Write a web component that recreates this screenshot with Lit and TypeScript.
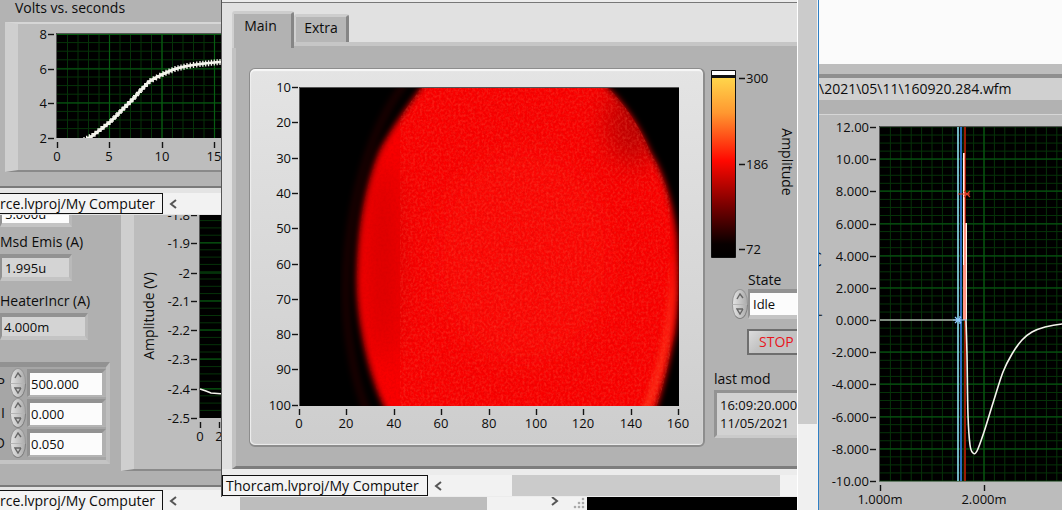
import { LitElement, html, svg, css } from "lit";
import { customElement, property } from "lit/decorators.js";

type Pt = [number, number];

const base = css`
  * { box-sizing: border-box; }
  svg { display: block; }
  text { font-family: "Open Sans", "Noto Sans", sans-serif; font-size: 13px; fill: #0c0c0c; }
  .caption { font-size: 14px; }
  .end { text-anchor: end; }
  .mid { text-anchor: middle; }
  .tick { stroke: #141414; stroke-width: 1.4; }
  .minor { stroke: #063309; stroke-width: 1; }
  .major { stroke: #075c12; stroke-width: 1.2; }
  .plot { fill: #000; }
  .edge { stroke: #555; stroke-width: 1; fill: none; }
  .trace { stroke: #f4f4ec; stroke-width: 1.6; fill: none; }
`;

/** Catmull-Rom spline through the points, as a cubic path. */
function smooth(pts: Pt[]): string {
  let d = `M${pts[0][0]} ${pts[0][1]}`;
  for (let i = 0; i < pts.length - 1; i++) {
    const a = pts[Math.max(0, i - 1)], b = pts[i], c = pts[i + 1], e = pts[Math.min(pts.length - 1, i + 2)];
    d += `C${b[0] + (c[0] - a[0]) / 6} ${b[1] + (c[1] - a[1]) / 6} ${c[0] - (e[0] - b[0]) / 6} ${c[1] - (e[1] - b[1]) / 6} ${c[0]} ${c[1]}`;
  }
  return d;
}

function range(from: number, to: number, step: number): number[] {
  const out: number[] = [];
  for (let v = from; v <= to + 0.001; v += step) out.push(v);
  return out;
}

function grid(x: number[], y: number[], x0: number, x1: number, y0: number, y1: number, kind: string) {
  return svg`<path class=${kind} fill="none" d=${
    x.map((v) => `M${v} ${y0}V${y1}`).join("") + y.map((v) => `M${x0} ${v}H${x1}`).join("")
  }></path>`;
}

const yTicks = (items: [string, number][], x: number) =>
  items.map(([t, y]) => svg`<path class="tick" d=${`M${x} ${y + 0.5}h6`}></path>
    <text class="end" x=${x - 1} y=${y + 5}>${t}</text>`);

const xTicks = (items: [string, number][], y: number) =>
  items.map(([t, x]) => svg`<path class="tick" d=${`M${x + 0.5} ${y}v6`}></path>
    <text class="mid" x=${x} y=${y + 19}>${t}</text>`);

/** Cathode voltage against time. */
@customElement("volts-chart")
class VoltsChart extends LitElement {
  static styles = [base, css`:host { display: block; }
    .marks { stroke: #f4f4ec; stroke-width: 1.3; fill: none; }
    .body { stroke: #f4f4ec; stroke-width: 2.6; fill: none; }`];
  render() {
    const knots: Pt[] = [[66, 116], [74, 112], [92, 98], [104, 86], [115, 75], [124, 65], [132, 57], [145, 50], [157, 45], [169, 42], [182, 40], [202, 38], [230, 37]];
    let marks = "";
    for (let i = 1; i < knots.length; i++) {
      const [ax, ay] = knots[i - 1], [bx, by] = knots[i];
      const n = Math.max(1, Math.round((bx - ax) / 3));
      for (let k = 0; k < n; k++) {
        const x = ax + ((bx - ax) * k) / n, y = ay + ((by - ay) * k) / n;
        marks += `M${x - 3} ${y}h6M${x} ${y - 3}v6`;
      }
    }
    return html`<svg width="100%" height="146" role="img" aria-label="Volts vs. seconds">
      <defs><clipPath id="c"><rect x="38" y="9" width="400" height="105"></rect></clipPath></defs>
      <rect class="plot" x="38" y="9" width="400" height="105"></rect>
      ${grid(range(49.5, 300, 10.5), range(18.6, 110, 8.6), 38, 438, 10, 114, "minor")}
      ${grid([91.5, 144, 196.5], [10.5, 45, 79], 38, 438, 10, 114, "major")}
      <path class="edge" d="M38.500 114V9.500H438"></path>
      <g clip-path="url(#c)">
        <path class="body" d=${smooth(knots)}></path>
        <path class="marks" d=${marks}></path>
      </g>
      ${yTicks([["8", 10], ["6", 45], ["4", 79], ["2", 114]], 30)}
      ${xTicks([["0", 39], ["5", 91], ["10", 144], ["15", 196]], 118)}
    </svg>`;
  }
}

/** Negative bias voltage strip. */
@customElement("bias-chart")
class BiasChart extends LitElement {
  static styles = [base, css`:host { display: block; }`];
  render() {
    return html`<svg width="100%" height="260" role="img" aria-label="Amplitude (V)">
      <rect class="plot" x="65" y="0" width="400" height="212"></rect>
      ${grid([], range(0, 211, 7.3), 65, 465, 0, 212, "minor")}
      ${grid([], [8, 37, 67, 95, 124, 153, 183], 65, 465, 0, 212, "major")}
      <path class="edge" d="M65.500 0V212"></path>
      <path class="trace" d="M66 183L72 185L77 187L90 188"></path>
      ${yTicks([["-1.8", 9], ["-1.9", 37], ["-2", 67], ["-2.1", 95], ["-2.2", 124], ["-2.3", 153], ["-2.4", 183], ["-2.5", 212]], 57)}
      ${xTicks([["0", 66], ["2", 85]], 216)}
      <text class="caption mid" transform="translate(20 110) rotate(-90)">Amplitude (V)</text>
    </svg>`;
  }
}

/** Camera intensity picture with pixel axes. */
@customElement("camera-image")
class CameraImage extends LitElement {
  static styles = [base, css`:host { display: block; }
    .ring { fill: none; stroke: #4a0000; stroke-width: 7; opacity: 0.4; }
    .rim { fill: none; stroke: url(#fade); stroke-width: 6; opacity: 0.75; }
    .shade { fill: #a80000; }
    .warm { fill: #ff1408; }`];
  render() {
    const disc = "M127 -6C108 20 90 45 80 65C66 100 59 140 58 185C57 215 62 250 72 285C78 305 84 318 90 330H354C364 304 370 275 376 246C380 220 380 180 378 150C374 115 364 85 352 66C340 38 325 15 302 -6Z";
    return html`<svg width="100%" height="376" role="img" aria-label="Camera image">
      <defs>
        <clipPath id="area"><rect width="380" height="319"></rect></clipPath>
        <clipPath id="disc"><path d=${disc}></path></clipPath>
        <linearGradient id="fade" gradientUnits="userSpaceOnUse" x1="0" y1="160" x2="0" y2="319">
          <stop offset="0" stop-color="#ff2010" stop-opacity="0"></stop><stop offset="0.3" stop-color="#ff3018"></stop><stop offset="1" stop-color="#ff4a24"></stop>
        </linearGradient>
        <filter id="soft" x="-10%" y="-10%" width="120%" height="120%"><feGaussianBlur stdDeviation="3"></feGaussianBlur></filter>
        <filter id="glow" filterUnits="userSpaceOnUse" x="280" y="120" width="110" height="230"><feGaussianBlur stdDeviation="3"></feGaussianBlur></filter>
        <filter id="wide" x="-150%" y="-80%" width="400%" height="260%"><feGaussianBlur stdDeviation="14"></feGaussianBlur></filter>
        <filter id="dark" x="0" y="0" width="100%" height="100%">
          <feTurbulence type="fractalNoise" baseFrequency="0.4" numOctaves="2" seed="4"></feTurbulence>
          <feColorMatrix values="0 0 0 0 0.6  0 0 0 0 0  0 0 0 0 0  1.6 0 0 0 -0.6"></feColorMatrix>
        </filter>
        <filter id="light" x="0" y="0" width="100%" height="100%">
          <feTurbulence type="fractalNoise" baseFrequency="0.42 0.36" numOctaves="2" seed="19"></feTurbulence>
          <feColorMatrix values="0 0 0 0 1  0 0 0 0 0.16  0 0 0 0 0.08  0 1.8 0 0 -0.7"></feColorMatrix>
        </filter>
      </defs>
      <g transform="translate(49 18)">
        <rect class="plot" width="380" height="319"></rect>
        <g clip-path="url(#area)">
          <path class="ring" filter="url(#soft)" d="M106 -4C80 30 64 75 55 120C46 170 44 220 52 265C56 290 62 310 68 325"></path>
          <path d=${disc} fill="#fa0000" filter="url(#soft)"></path>
          <g clip-path="url(#disc)">
            <ellipse class="warm" cx="225" cy="170" rx="90" ry="110" filter="url(#wide)" opacity="0.4"></ellipse>
            <ellipse class="shade" cx="335" cy="35" rx="26" ry="42" filter="url(#wide)" opacity="0.8"></ellipse>
            <ellipse class="shade" cx="84" cy="175" rx="16" ry="100" filter="url(#wide)" opacity="0.4"></ellipse>
            <rect width="380" height="319" filter="url(#dark)" opacity="0.4"></rect>
            <rect x="101" width="270" height="319" filter="url(#light)" opacity="0.35"></rect>
            <path class="rim" filter="url(#glow)" d="M374 160C375 225 367 270 346 325"></path>
          </g>
        </g>
        <path class="edge" d="M0.500 319V0.500H380"></path>
      </g>
      ${yTicks([10, 20, 30, 40, 50, 60, 70, 80, 90, 100].map((v, i) => [String(v), 18 + Math.round(i * 35.3)] as [string, number]), 42)}
      ${xTicks([0, 20, 40, 60, 80, 100, 120, 140, 160].map((v, i) => [String(v), Math.round(49 + i * 47.4)] as [string, number]), 340)}
    </svg>`;
  }
}

/** Colour ramp with its scale. */
@customElement("color-ramp")
class ColorRamp extends LitElement {
  static styles = [base, css`:host { display: block; }
    .frame { fill: none; stroke: #111; stroke-width: 1; }
    .over { fill: #fff; }
    .bar { fill: #111; }`];
  render() {
    return html`<svg width="100%" height="189" role="img" aria-label="Amplitude scale">
      <defs><linearGradient id="g" x1="0" y1="0" x2="0" y2="1">
        <stop offset="0" stop-color="#ffe050"></stop><stop offset="0.22" stop-color="#ff9830"></stop>
        <stop offset="0.48" stop-color="#ff0800"></stop><stop offset="0.72" stop-color="#7a0000"></stop>
        <stop offset="0.93" stop-color="#080000"></stop><stop offset="1" stop-color="#000"></stop>
      </linearGradient></defs>
      <rect x="1" y="2" width="24" height="185" fill="url(#g)"></rect>
      <rect class="over" x="1" y="1" width="24" height="5"></rect>
      <rect class="bar" x="1" y="5" width="24" height="3"></rect>
      <path class="frame" d="M0.500 0.500H24.500V187.500H0.500Z"></path>
      <path class="tick" d="M28 8.500h6M28 94.500h6M28 179.500h6"></path>
      <text x="35" y="13">300</text><text x="35" y="99">186</text><text x="35" y="184">72</text>
      <text class="caption mid" transform="translate(71 92) rotate(90)">Amplitude</text>
    </svg>`;
  }
}

/** Recorded waveform with two cursors. */
@customElement("wave-chart")
class WaveChart extends LitElement {
  static styles = [base, css`:host { display: block; }
    .cyan { stroke: #8fe0f0; stroke-width: 1.6; }
    .blue { stroke: #2a6cc0; stroke-width: 2; }
    .red { stroke: #9c1a04; stroke-width: 2; }
    .peak { stroke: #ff9484; stroke-width: 2; }
    .core { stroke: #fff0ea; stroke-width: 1; }
    .flat { stroke: #a8a8a8; stroke-width: 1.6; }
    .cross { stroke: #8cc8ff; stroke-width: 1.2; fill: none; }
    .mark { stroke: #e04028; stroke-width: 1.2; fill: none; }`];
  render() {
    const y = (v: number) => Math.round(12 + (12 - v) * 16.09);
    const labels = ["12.00", "10.00", "8.000", "6.000", "4.000", "2.000", "0.000", "-2.000", "-4.000", "-6.000", "-8.000", "-10.00"];
    const ys = labels.map((_, i) => y(12 - 2 * i));
    const tail: Pt[] = [[147, 205], [148, 240], [149, 300], [151, 330], [154, 338], [158, 336], [165, 317], [174, 288], [184, 257], [193, 239], [203, 225], [213, 217], [226, 212], [243, 209], [270, 208], [330, 207], [400, 206]];
    return html`<svg width="100%" height="396" role="img" aria-label="Waveform">
      <rect class="plot" x="60" y="11" width="1600" height="355"></rect>
      ${grid(range(71.4, 1600, 10.4), range(12, 366, 8.045), 60, 1660, 12, 366, "minor")}
      ${grid([165, 269, 373, 477], ys.slice(1, -1), 60, 1660, 12, 366, "major")}
      <path class="edge" d="M60.500 366V11.500H1660"></path>
      <path class="flat" d="M61 205H140"></path>
      <path class="red" d="M146 12V366"></path>
      <path class="peak" d="M145 38V205M147 108V205"></path>
      <path class="core" d="M144.500 38V150M147.500 108V205"></path>
      <path class="trace" d=${smooth(tail) + "H1660"}></path>
      <path class="cyan" d="M139 12V366"></path>
      <path class="blue" d="M142 12V366"></path>
      <path class="cross" d="M134 205h14M136 202l6 6M142 202l-6 6M141 201v8"></path>
      <path class="mark" d="M139 79h12M145 76l6 6M151 76l-6 6"></path>
      ${yTicks(labels.map((t, i) => [t, ys[i]] as [string, number]), 51)}
      ${xTicks([["1.000m", 61], ["2.000m", 165]], 370)}
      <text class="caption mid" transform="translate(-1 180) rotate(-90)">Amplitude (V)</text>
    </svg>`;
  }
}

/** Round increment and decrement pair beside a field. */
@customElement("spin-buttons")
class SpinButtons extends LitElement {
  static styles = css`
    :host { display: flex; flex-direction: column; width: 16px; height: 30px; }
    button { flex: 1; padding: 0; border: 1px solid #989898; background: linear-gradient(90deg, #e2e2e2, #acacac); min-height: 0; }
    button:first-child { border-radius: 8px 8px 0 0 / 14px 14px 0 0; border-bottom: 0; }
    button:last-child { border-radius: 0 0 8px 8px / 0 0 14px 14px; border-color: #b4b4b4 #808080 #808080 #989898; }
    svg { display: block; margin: 0 auto; }
    path { fill: none; stroke: #666; stroke-width: 1.4; }
  `;
  render() {
    return html`<button aria-label="Increase"><svg width="8" height="7"><path d="M1 6L4 1L7 5"></path></svg></button>
      <button aria-label="Decrease"><svg width="8" height="7"><path d="M7 1H1L4 6L7 1"></path></svg></button>`;
  }
}

/** Bottom strip of a window: project name and horizontal scroll bar. */
@customElement("status-strip")
class StatusStrip extends LitElement {
  @property() project = "";
  @property({ type: Boolean, reflect: true }) cut = false;
  @property({ type: Boolean, reflect: true }) grip = false;
  static styles = css`
    :host { display: flex; height: 21px; background: #f2f2f2; font: 14px/19px "Open Sans", "Noto Sans", sans-serif; color: #0c0c0c; }
    .name { box-sizing: border-box; flex: none; border: 1px solid #111; background: #f4f4f4; padding: 0 3px; white-space: nowrap; width: 206px; overflow: hidden; }
    :host([cut]) .name { width: 163px; border-left: 0; padding-left: 0; }
    button { flex: none; width: 20px; padding: 0; border: 0; background: none; }
    svg { display: block; margin: 0 auto; }
    path { fill: none; stroke: #555; stroke-width: 2; }
    .track { flex: 1; display: flex; }
    .lead { flex: 0 0 64px; }
    :host([cut]) .lead { flex-basis: 57px; }
    .thumb { flex: 1; background: #cbcbcb; }
    .tail { flex: 0 0 17px; }
    :host([grip]) .tail { flex-basis: 58px; }
    :host([grip]) .thumb { background: #bdbdbd; }
    circle { fill: #aaa; }
  `;
  render() {
    return html`<div class="name">${this.project}</div>
      <button aria-label="Scroll left"><svg width="8" height="10"><path d="M7 1L2 5L7 9"></path></svg></button>
      <div class="track"><div class="lead"></div><div class="thumb"></div><div class="tail"></div></div>
      ${this.grip
        ? html`<button aria-label="Scroll right"><svg width="8" height="10"><path d="M1 1L6 5L1 9"></path></svg></button>
          <svg width="22" height="20"><circle cx="18" cy="9" r="1.300"></circle><circle cx="14" cy="13" r="1.300"></circle><circle cx="18" cy="13" r="1.300"></circle><circle cx="10" cy="17" r="1.300"></circle><circle cx="14" cy="17" r="1.300"></circle><circle cx="18" cy="17" r="1.300"></circle></svg>`
        : ""}`;
  }
}

@customElement("app-root")
class AppRoot extends LitElement {
  static styles = css`
    :host { display: block; font: 14px/18px "Open Sans", "Noto Sans", sans-serif; color: #0c0c0c; }
    * { box-sizing: border-box; }
    .desktop { position: relative; height: 100vh; overflow: hidden; background: #000; }
    .window { position: absolute; overflow: hidden; display: flex; flex-direction: column; }
    .body { flex: 1; min-height: 0; }
    .foot { flex: none; border-top: 2px solid #7a7a7a; background: #e4e4e4; padding: 5px 0 1px; }

    .volts { left: 0; top: 0; width: 240px; height: 215px; z-index: 2; background: #b3b3b3; }
    .volts h2 { margin: 0; padding: 0 15px; font-size: 14px; font-weight: 400; line-height: 16px; }
    .recess { border-left: 13px solid #cfcfcf; border-top: 2px solid #d6d6d6; border-bottom: 2px solid #8a8a8a; background: #bdbdbd; }
    .volts .recess { margin: 6px 0 0 5px; }

    .source { left: 0; top: 195px; width: 587px; bottom: 0; z-index: 1; background: #b0b0b0; }
    .source .body { display: flex; }
    .source .foot { padding-top: 3px; height: 25px; }
    .controls { width: 121px; flex: none; padding-top: 5px; display: flex; flex-direction: column; align-items: flex-start; }
    .controls label { line-height: 18px; white-space: nowrap; }
    .controls > label { margin-top: 6px; margin-bottom: 3px; }
    .field { height: 27px; border: solid; border-width: 4px 3px 4px 2px; border-color: #929292 #b9b9b9 #c4c4c4 #929292; background: #d4d4d4; padding: 0 3px; font: inherit; font-size: 13px; color: inherit; border-radius: 0; }
    .w70 { width: 72px; }
    .w88 { width: 88px; padding-left: 2px; }
    .group { margin-bottom: 5px; }
    .white { background: #fcfcfc; }
    .cluster { margin-top: 22px; width: 110px; border: solid; border-width: 5px 4px 4px 0; border-color: #929292 #bebebe #c4c4c4 #929292; background: #a6a6a6; padding: 1px 0 2px; }
    .row { display: flex; align-items: center; height: 30px; gap: 1px; }
    .row label { width: 9px; direction: rtl; overflow: hidden; padding-right: 4px; }
    .row .field { width: 79px; height: 28px; border-color: #929292 #b0b0b0 #b4b4b4 #929292; border-width: 4px 4px 2px 3px; padding: 0 1px; }
    .source .recess { flex: 1; margin: 0; min-width: 0; padding-top: 9px; height: 276px; }

    .camera { left: 221px; top: 0; width: 576px; height: 497px; z-index: 3; background: #e1e1e1; border-left: 1px solid #555; }
    .title { height: 3px; flex: none; border-bottom: 1px solid #777; background: #ececec; }
    .tabs { display: flex; padding: 8px 0 0 10px; height: 39px; flex: none; align-items: flex-end; }
    .tab { border: solid; border-width: 3px 3px 0 2px; border-color: #cdcdcd #858585 #858585 #cfcfcf; background: #b6b6b6; font: inherit; color: inherit; padding: 0 0 3px; width: 55px; height: 28px; border-radius: 3px 3px 0 0; }
    .tab[aria-selected="true"] { width: 62px; height: 37px; padding-bottom: 11px; margin-bottom: -6px; position: relative; background: #b2b2b2; padding-right: 4px; }
    .page { margin-left: 10px; flex: 1; background: #b2b2b2; border-top: 4px solid #c6c6c6; border-left: 4px solid #c2c2c2; border-bottom: 3px solid #7d7d7d; display: flex; padding: 22px 0 19px 13px; min-height: 0; }
    .graph { width: 456px; flex: none; border-radius: 6px; border: solid #8d8d8d; border-width: 1px 2px 2px 1px; background: linear-gradient(#e4e4e4, #cdcdcd); box-shadow: inset 0 2px 1px #f8f8f8, inset 1px -1px 1px #eee; }
    .side { flex: 1; min-width: 0; margin-left: 6px; padding-top: 2px; }
    .state { display: grid; grid-template-columns: 16px 1fr; margin: 12px 0 0 21px; align-items: center; width: 90px; }
    .state label { grid-column: 2; }
    .state .field { width: 100%; height: 30px; }
    .stop { display: block; margin: 10px 0 0 36px; width: 70px; height: 26px; border: 2px solid #6e6e6e; background: linear-gradient(135deg, #dcdcdc, #c2c2c2 30%); color: #e8141c; font: inherit; padding: 0 0 0 10px; text-align: left; }
    .stamp { display: block; margin: 15px 0 2px 3px; line-height: 18px; }
    .time { display: block; margin-left: 3px; width: 100px; height: 48px; border: 3px solid #939393; border-bottom-color: #cacaca; background: #d2d2d2; padding: 3px 0 0 3px; font-size: 13px; line-height: 18px; white-space: pre; }
    .camera .foot { border-top: 0; padding-top: 6px; background: #ececec; }

    .vbar { left: 797px; top: 0; bottom: 0; width: 21px; z-index: 3; background: #f0f0f0; border-left: 1px solid #fff; border-right: 1px solid #f4f4f4; }
    .vthumb { height: 424px; background: #cbcbcb; }

    .wave { left: 818px; right: 0; top: 0; bottom: 0; z-index: 4; background: #bcbcbc; border-left: 1px solid #2f7fc4; }
    .blank { height: 64px; flex: none; background: #fbfbfb; }
    .rim { height: 14px; flex: none; background: #bdbdbd; border-bottom: 4px solid #8f8f8f; }
    .file { height: 22px; flex: none; background: #d0d0d0; white-space: nowrap; line-height: 22px; }
    .band { height: 15px; flex: none; background: #b2b2b2; border-bottom: 1px solid #d6d6d6; }
  `;

  private gain(name: string, value: string) {
    return html`<div class="row"><label for=${"gain" + name}>${name}</label><spin-buttons></spin-buttons>
      <input class="field white" id=${"gain" + name} .value=${value}></div>`;
  }

  render() {
    return html`<main class="desktop">
      <section class="window volts">
        <div class="body">
          <h2>Volts vs. seconds</h2>
          <div class="recess"><volts-chart></volts-chart></div>
        </div>
        <div class="foot"><status-strip cut project="rce.lvproj/My Computer"></status-strip></div>
      </section>

      <section class="window source">
        <div class="body">
          <div class="controls">
            <input class="field white w70" aria-label="Emission set point" .value=${"5.000u"}>
            <label for="emis">Msd Emis (A)</label>
            <input class="field w70 group" id="emis" readonly .value=${"1.995u"}>
            <label for="heater">HeaterIncr (A)</label>
            <input class="field w88" id="heater" readonly .value=${"4.000m"}>
            <div class="cluster">
              ${this.gain("P", "500.000")}${this.gain("I", "0.000")}${this.gain("D", "0.050")}
            </div>
          </div>
          <div class="recess"><bias-chart></bias-chart></div>
        </div>
        <div class="foot"><status-strip cut grip project="rce.lvproj/My Computer"></status-strip></div>
      </section>

      <section class="window camera">
        <div class="title"></div>
        <div class="tabs" role="tablist">
          <button class="tab" role="tab" aria-selected="true">Main</button>
          <button class="tab" role="tab" aria-selected="false">Extra</button>
        </div>
        <div class="page">
          <div class="graph"><camera-image></camera-image></div>
          <div class="side">
            <color-ramp></color-ramp>
            <div class="state">
              <label for="state">State</label>
              <spin-buttons></spin-buttons>
              <input class="field white" id="state" .value=${"Idle"}>
            </div>
            <button class="stop">STOP</button>
            <label class="stamp" for="stamp">last mod</label>
            <output class="time" id="stamp">16:09:20.000
11/05/2021</output>
          </div>
        </div>
        <div class="foot"><status-strip project="Thorcam.lvproj/My Computer"></status-strip></div>
      </section>

      <div class="window vbar"><div class="vthumb"></div></div>

      <section class="window wave">
        <div class="blank"></div>
        <div class="rim"></div>
        <output class="file">\\2021\\05\\11\\160920.284.wfm</output>
        <div class="band"></div>
        <wave-chart></wave-chart>
      </section>
    </main>`;
  }
}
